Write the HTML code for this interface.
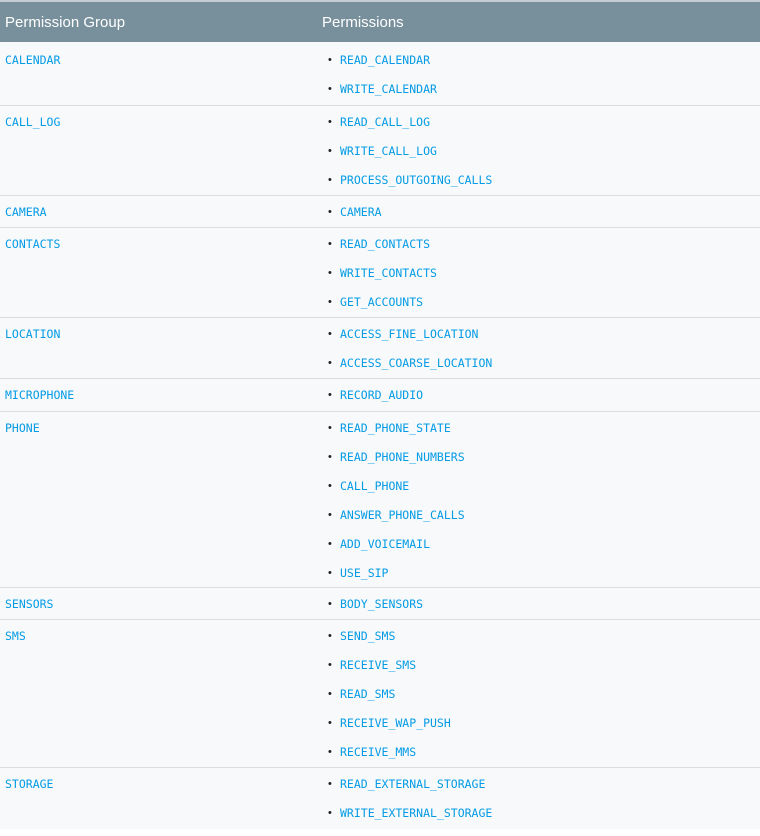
<!DOCTYPE html>
<html><head><meta charset="utf-8"><style>
body{margin:0;background:#fff;width:760px;height:836px;overflow:hidden}
.hd{height:40px;background:#78909c;border-top:2px solid #c4ccd1;color:#fff;font:15px "Liberation Sans",sans-serif;position:relative}
.hd span{position:absolute;top:12px}
.r{background:#f8f9fa;border-bottom:1px solid #dadce0;position:relative;box-sizing:border-box}
.r:last-child{border-bottom:none}
.g,.p{position:absolute;top:1.5px;font:11.5px "DejaVu Sans Mono",monospace;color:#039be5;line-height:29px}
.g{left:5px}
.p{left:328px;margin:0;padding:0;list-style:none}
.p li:before{content:"•";color:#202124;font-family:"Liberation Sans",sans-serif;position:absolute;left:0;font-size:11px}
.p li{padding-left:12px}
</style></head><body>
<div class="hd"><span style="left:5px">Permission Group</span><span style="left:322px">Permissions</span></div>
<div>
<div class="r" style="height:64px;padding-top:2px"><div class="g" style="top:4px">CALENDAR</div><ul class="p" style="top:4px"><li>READ_CALENDAR</li><li>WRITE_CALENDAR</li></ul></div>
<div class="r" style="height:90px"><div class="g">CALL_LOG</div><ul class="p"><li>READ_CALL_LOG</li><li>WRITE_CALL_LOG</li><li>PROCESS_OUTGOING_CALLS</li></ul></div>
<div class="r" style="height:32px"><div class="g">CAMERA</div><ul class="p"><li>CAMERA</li></ul></div>
<div class="r" style="height:90px"><div class="g">CONTACTS</div><ul class="p"><li>READ_CONTACTS</li><li>WRITE_CONTACTS</li><li>GET_ACCOUNTS</li></ul></div>
<div class="r" style="height:61px"><div class="g">LOCATION</div><ul class="p"><li>ACCESS_FINE_LOCATION</li><li>ACCESS_COARSE_LOCATION</li></ul></div>
<div class="r" style="height:33px"><div class="g">MICROPHONE</div><ul class="p"><li>RECORD_AUDIO</li></ul></div>
<div class="r" style="height:176px"><div class="g">PHONE</div><ul class="p"><li>READ_PHONE_STATE</li><li>READ_PHONE_NUMBERS</li><li>CALL_PHONE</li><li>ANSWER_PHONE_CALLS</li><li>ADD_VOICEMAIL</li><li>USE_SIP</li></ul></div>
<div class="r" style="height:32px"><div class="g">SENSORS</div><ul class="p"><li>BODY_SENSORS</li></ul></div>
<div class="r" style="height:148px"><div class="g">SMS</div><ul class="p"><li>SEND_SMS</li><li>RECEIVE_SMS</li><li>READ_SMS</li><li>RECEIVE_WAP_PUSH</li><li>RECEIVE_MMS</li></ul></div>
<div class="r" style="height:61px"><div class="g">STORAGE</div><ul class="p"><li>READ_EXTERNAL_STORAGE</li><li>WRITE_EXTERNAL_STORAGE</li></ul></div>
</div>
</body></html>
